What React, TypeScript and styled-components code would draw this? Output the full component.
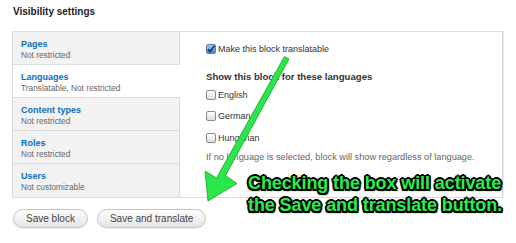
import React from "react";
import styled, { createGlobalStyle } from "styled-components";

const Global = createGlobalStyle`
  html, body { margin: 0; padding: 0; background: #ffffff; }
  body { font-family: "Liberation Sans", Arial, sans-serif; color: #333; }
`;

const Page = styled.div`
  position: relative;
  width: 516px;
  height: 243px;
  padding: 6px 13px 0 12px;
  box-sizing: border-box;
  overflow: hidden;
`;

const Heading = styled.h2`
  margin: 0 0 13px 1px;
  font-size: 10px;
  line-height: 12px;
  font-weight: bold;
  color: #222;
`;

const Panel = styled.div`
  display: flex;
  width: 491px;
  border: 1px solid #dcdcdc;
  border-right-color: #d4d4d4;
  box-shadow: 1px 0 0 #ececec;
  box-sizing: border-box;
`;

const TabList = styled.ul`
  list-style: none;
  margin: 0;
  padding: 0;
  width: 166px;
  flex: none;
  background: #f2f2f2;
  border-right: 1px solid #dcdcdc;
`;

const Tab = styled.li<{ $active?: boolean; $last?: boolean }>`
  height: 33px;
  box-sizing: border-box;
  padding: 7px 0 0 8px;
  background: ${(p) => (p.$active ? "#ffffff" : "#f2f2f2")};
  border-bottom: ${(p) => (p.$last ? "none" : "1px solid #dcdcdc")};
  margin-right: ${(p) => (p.$active ? "-1px" : "0")};
`;

const TabTitle = styled.div`
  font-size: 9px;
  line-height: 11px;
  font-weight: bold;
  color: #0b6fbf;
`;

const TabSummary = styled.div`
  font-size: 8.3px;
  line-height: 10px;
  color: #666;
`;

const Pane = styled.div`
  flex: 1;
  padding: 11px 0 0 26px;
  background: #fff;
`;

const CheckRow = styled.label<{ $gap?: number }>`
  display: flex;
  align-items: center;
  gap: 2px;
  height: 12px;
  margin-bottom: ${(p) => p.$gap ?? 0}px;
  font-size: 9px;
  color: #333;
`;

const Box = styled.span<{ $checked?: boolean }>`
  display: inline-flex;
  align-items: center;
  justify-content: center;
  width: 8px;
  height: 8px;
  border: 1px solid ${(p) => (p.$checked ? "#5a7fa8" : "#8c8c8c")};
  border-radius: 2px;
  background: ${(p) =>
    p.$checked
      ? "linear-gradient(#9cc6f3, #3f86d6)"
      : "linear-gradient(#ffffff, #dcdcdc)"};
  box-sizing: content-box;
`;

const SubHeading = styled.div`
  margin: 16px 0 6px;
  font-size: 9.6px;
  line-height: 12px;
  font-weight: bold;
  color: #333;
`;

const Help = styled.div`
  margin-top: 7px;
  font-size: 9.2px;
  line-height: 12px;
  color: #666;
`;

const Actions = styled.div`
  display: flex;
  gap: 9px;
  margin: 11px 0 0 1px;
`;

const Button = styled.button`
  height: 19px;
  padding: 0 12px;
  border: 1px solid #c6c6c6;
  border-radius: 10px;
  background: linear-gradient(#fdfdfd, #e5e5e5);
  font-family: "Liberation Sans", Arial, sans-serif;
  font-size: 10px;
  color: #444;
  box-shadow: 0 1px 0 #f0f0f0;
`;

const ArrowLayer = styled.svg`
  position: absolute;
  left: 0;
  top: 0;
  width: 516px;
  height: 243px;
  pointer-events: none;
`;

const Callout = styled.div`
  position: absolute;
  left: 248px;
  top: 172px;
  font-family: "Liberation Sans", Arial, sans-serif;
  font-weight: bold;
  font-size: 18px;
  line-height: 22px;
  letter-spacing: -0.1px;
  color: #2bec4c;
  white-space: nowrap;
  text-shadow:
    2px 0 0 #000, -2px 0 0 #000, 0 2px 0 #000, 0 -2px 0 #000,
    1.5px 1.5px 0 #000, -1.5px 1.5px 0 #000, 1.5px -1.5px 0 #000, -1.5px -1.5px 0 #000,
    1px 2px 2px rgba(0,0,0,0.6);
`;

const Check = () => (
  <svg width="8" height="8" viewBox="0 0 8 8">
    <path d="M1 4.2 L3.2 6.6 L7.4 0.6" fill="none" stroke="#1b2b44" strokeWidth="1.5" />
  </svg>
);

const tabs = [
  { title: "Pages", summary: "Not restricted" },
  { title: "Languages", summary: "Translatable, Not restricted", active: true },
  { title: "Content types", summary: "Not restricted" },
  { title: "Roles", summary: "Not restricted" },
  { title: "Users", summary: "Not customizable" },
];

export default function App() {
  return (
    <>
      <Global />
      <Page>
        <Heading>Visibility settings</Heading>
        <Panel>
          <TabList>
            {tabs.map((t, i) => (
              <Tab key={t.title} $active={t.active} $last={i === tabs.length - 1}>
                <TabTitle>{t.title}</TabTitle>
                <TabSummary>{t.summary}</TabSummary>
              </Tab>
            ))}
          </TabList>
          <Pane>
            <CheckRow>
              <Box $checked>
                <Check />
              </Box>
              Make this block translatable
            </CheckRow>
            <SubHeading>Show this block for these languages</SubHeading>
            <CheckRow $gap={9}>
              <Box />
              English
            </CheckRow>
            <CheckRow $gap={10}>
              <Box />
              German
            </CheckRow>
            <CheckRow>
              <Box />
              Hungarian
            </CheckRow>
            <Help>If no language is selected, block will show regardless of language.</Help>
          </Pane>
        </Panel>
        <Actions>
          <Button>Save block</Button>
          <Button>Save and translate</Button>
        </Actions>
        <ArrowLayer viewBox="0 0 516 243">
          <path
            d="M284.5 56.5 L289 59 L225.5 175.5 L237 183.5 L208 201 L205 171 L216.5 178 Z"
            fill="#2ae64a"
            stroke="#15a02c"
            strokeWidth="0.8"
            strokeLinejoin="round"
          />
        </ArrowLayer>
        <Callout>
          Checking the box will activate
          <br />
          the Save and translate button.
        </Callout>
      </Page>
    </>
  );
}
